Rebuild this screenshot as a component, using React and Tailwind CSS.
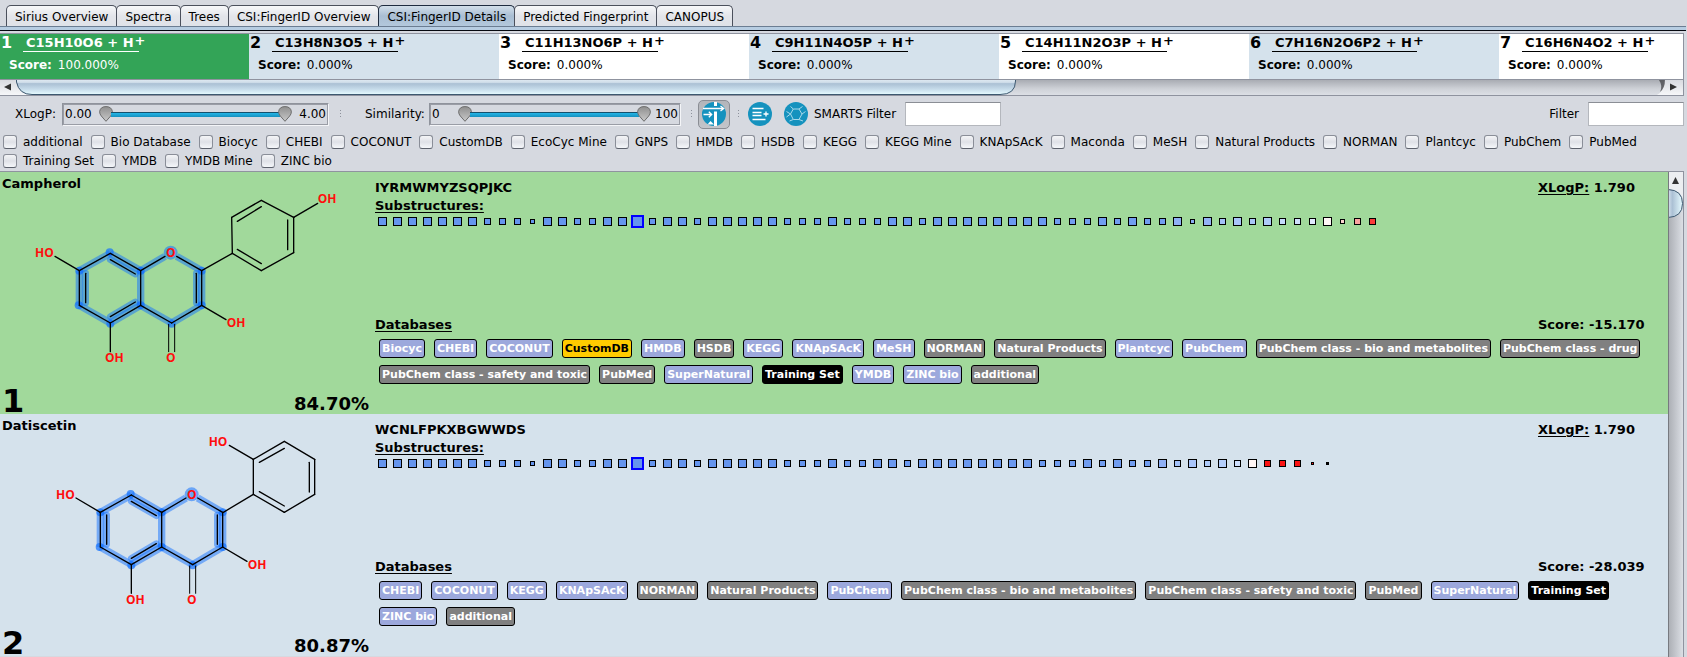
import React, { useState } from "react";

const TABS = [
  "Sirius Overview",
  "Spectra",
  "Trees",
  "CSI:FingerID Overview",
  "CSI:FingerID Details",
  "Predicted Fingerprint",
  "CANOPUS",
];

const FORMULAS = [
  ["C15H10O6", "100.000%"],
  ["C13H8N3O5", "0.000%"],
  ["C11H13NO6P", "0.000%"],
  ["C9H11N4O5P", "0.000%"],
  ["C14H11N2O3P", "0.000%"],
  ["C7H16N2O6P2", "0.000%"],
  ["C16H6N4O2", "0.000%"],
];

const DATABASES = [
  "additional", "Bio Database", "Biocyc", "CHEBI", "COCONUT", "CustomDB", "EcoCyc Mine", "GNPS",
  "HMDB", "HSDB", "KEGG", "KEGG Mine", "KNApSAcK", "Maconda", "MeSH", "Natural Products",
  "NORMAN", "Plantcyc", "PubChem", "PubMed", "Training Set", "YMDB", "YMDB Mine", "ZINC bio",
];

const SHARED = "LLLLLLLSSSTLLSSLLXSLLSLLLLLSSSL";

const CANDIDATES = [
  {
    rank: 1,
    name: "Campherol",
    key: "IYRMWMYZSQPJKC",
    similarity: "84.70%",
    xlogp: "1.790",
    score: "-15.170",
    sizes: SHARED + "SSSLLSLLLLLLLLSSSLSLSSLTLSLSLSSSLTSS",
    tail: ["#8fb0f5", "#8aacf3", "#93b3f5", "#a3c1f8", "#a9c5fa", "#a8c6f7", "#aecaf8", "#c4dafb", "#cfdffc", "#e0e9fd", "#fff6f5", "#fcd5d0", "#f9a3a0", "#fb3b3b"],
    badges: ["Biocyc", "CHEBI", "COCONUT", "CustomDB", "HMDB", "HSDB", "KEGG", "KNApSAcK", "MeSH", "NORMAN", "Natural Products", "Plantcyc", "PubChem", "PubChem class - bio and metabolites", "PubChem class - drug", "PubChem class - safety and toxic", "PubMed", "SuperNatural", "Training Set", "YMDB", "ZINC bio", "additional"],
  },
  {
    rank: 2,
    name: "Datiscetin",
    key: "WCNLFPKXBGWWDS",
    similarity: "80.87%",
    xlogp: "1.790",
    score: "-28.039",
    sizes: SHARED + "SSLLSLLLLLLLLSSSLSLSSLSLSLSLSSSMM",
    tail: ["#8fb0f5", "#a3c1f8", "#a9c5fa", "#aecaf8", "#b4cefa", "#cfdffc", "#fff6f5", "#fb1414", "#fb1414", "#fb1414", "#fb1414", "#000000"],
    badges: ["CHEBI", "COCONUT", "KEGG", "KNApSAcK", "NORMAN", "Natural Products", "PubChem", "PubChem class - bio and metabolites", "PubChem class - safety and toxic", "PubMed", "SuperNatural", "Training Set", "ZINC bio", "additional"],
  },
];

const BADGE_STYLE = {
  CustomDB: "bg-[#ffcc00] text-black",
  "Training Set": "bg-black text-white",
  HSDB: "bg-[#808080] text-white",
  NORMAN: "bg-[#808080] text-white",
  "Natural Products": "bg-[#808080] text-white",
  PubMed: "bg-[#808080] text-white",
  additional: "bg-[#808080] text-white",
};

function badgeStyle(name) {
  if (name.startsWith("PubChem class")) return "bg-[#808080] text-white";
  return BADGE_STYLE[name] || "bg-[#9ca8dc] text-white";
}

const SQUARE = {
  L: "size-[9px] border border-black",
  S: "size-[7px] border border-black",
  T: "size-[5px] border border-black",
  M: "size-[3px] border border-black",
  X: "size-[13px] border-2 border-[#0000ff]",
};

function Tabs() {
  const [active, setActive] = useState(4);
  return (
    <nav role="tablist" className="pt-[5px] mr-px">
      <div className="flex pl-1.5">
        {TABS.map((tab, i) => (
          <button
            key={tab}
            role="tab"
            aria-selected={i === active}
            onClick={() => setActive(i)}
            className={
              "h-[21px] -mr-px px-2 pt-px rounded-t-[5px] border border-b-0 whitespace-nowrap leading-5 " +
              (i === active
                ? "border-[#1f2c40] bg-linear-to-b from-[#d3dfea] via-[#a9bed3] to-[#b3c8dc]"
                : "border-[#4b505c] bg-linear-to-b from-[#f7f8fa] via-[#e3e5ea] to-[#dfe2e8]")
            }
          >
            {tab}
          </button>
        ))}
      </div>
      <div className="h-[5px] border-t border-b border-t-[#6b7d92] border-b-[#05080f] bg-[#b7cde2]" />
    </nav>
  );
}

function FormulaList() {
  return (
    <section className="mt-0.5 mr-[3px] border border-l-0 border-[#8f939f]">
      <div className="flex overflow-x-clip">
        {FORMULAS.map(([formula, score], i) => (
          <div
            key={formula}
            className={
              "h-[45px] shrink-0 " +
              (i === 0
                ? "w-[249px] bg-[#33a457] text-white border-white"
                : i % 2 === 1
                  ? "w-[250px] bg-[#d5e2ec] text-black border-black"
                  : "w-[250px] bg-white text-black border-black")
            }
          >
            <div className="flex h-[18px] items-end border-inherit font-bold">
              <span className="w-[23px] pl-px text-base leading-[18px]">{i + 1}</span>
              <span className="border-b border-inherit pl-[3px] pr-[5px] text-[13px] leading-[17px]">{formula} + H</span>
              <span className="-ml-1 h-[18px] text-[13px] leading-[13px]">+</span>
            </div>
            <div className="flex gap-1.5 pl-[9px] pt-[3px] leading-5">
              <b>Score:</b>
              <span>{score}</span>
            </div>
          </div>
        ))}
      </div>
      <div className="flex h-4 border-t border-[#8f939f]" aria-hidden="true">
        <svg className="h-[15px] w-full" preserveAspectRatio="none">
          <defs>
            <linearGradient id="track" x1="0" y1="0" x2="0" y2="1">
              <stop offset="0" stopColor="#a9acb3" />
              <stop offset="0.6" stopColor="#cfd2d8" />
              <stop offset="1" stopColor="#dcdfe5" />
            </linearGradient>
            <linearGradient id="thumb" x1="0" y1="0" x2="0" y2="1">
              <stop offset="0" stopColor="#e3ebf3" />
              <stop offset="0.22" stopColor="#d0deea" />
              <stop offset="0.3" stopColor="#abc0d4" />
              <stop offset="0.65" stopColor="#c6dbea" />
              <stop offset="1" stopColor="#e6fbff" />
            </linearGradient>
            <linearGradient id="thumbV" x1="0" y1="0" x2="1" y2="0">
              <stop offset="0" stopColor="#d6e2ee" />
              <stop offset="0.3" stopColor="#abc0d4" />
              <stop offset="1" stopColor="#e6fbff" />
            </linearGradient>
            <linearGradient id="cap" x1="0" y1="0" x2="0" y2="1">
              <stop offset="0" stopColor="#d9dbe0" />
              <stop offset="1" stopColor="#f6f7f9" />
            </linearGradient>
          </defs>
          <rect width="100%" height="15" fill="url(#track)" />
          <path d="M0 0H16Q17 12 28 15H0Z" fill="url(#cap)" />
          <path d="M11 3.5V10.500L4 7Z" fill="#333" />
          <path d="M16.500 -1V2Q19 14.500 32 14.500H1000Q1015.500 14.500 1015.500 1V-1Z" fill="url(#thumb)" stroke="#3d5870" />
          <svg x="100%" overflow="visible">
            <path d="M-19 0H0V15H-26Q-19 11 -19 0Z" fill="url(#cap)" />
            <path d="M-24 0H-18Q-18 8 -23 12Q-20 6 -24 0Z" fill="#4a4a4d" opacity="0.8" />
            <path d="M-13 3.500V10.500L-6 7Z" fill="#333" />
          </svg>
        </svg>
      </div>
    </section>
  );
}

function Thumb() {
  return (
    <svg width="14" height="16" viewBox="0 0 14 16" className="shrink-0">
      <defs>
        <linearGradient id="knob" x1="0" y1="0" x2="0" y2="1">
          <stop offset="0" stopColor="#8f8f8f" />
          <stop offset="1" stopColor="#c9c9c9" />
        </linearGradient>
      </defs>
      <path d="M7 15.300L2.300 10Q0.600 8 0.600 5.500Q1.500 0.600 7 0.600Q12.500 0.600 13.400 5.500Q13.400 8 11.700 10Z" fill="url(#knob)" stroke="#6d6d6d" />
    </svg>
  );
}

function RangeBox({ label, low, high, className, trackClass }) {
  return (
    <div
      role="group"
      aria-label={label}
      className={"flex h-[23px] items-center border border-[#8f939c] border-r-[#f4f5f8] border-b-[#f4f5f8] px-0.5 outline-1 -outline-offset-2 outline-[#9a9da6] " + className}
    >
      <span>{low}</span>
      <div className={"relative ml-auto flex w-[193px] items-center " + trackClass}>
        <Thumb />
        <div className="-mx-0.5 h-[5px] grow border-t border-[#14506c] bg-linear-to-b from-[#25b6e8] to-[#1590bd]" />
        <Thumb />
        <input type="range" aria-label={label + " minimum"} defaultValue="0" className="absolute inset-y-0 left-0 w-1/2 opacity-0" />
        <input type="range" aria-label={label + " maximum"} defaultValue="100" className="absolute inset-y-0 right-0 w-1/2 opacity-0" />
      </div>
      <span>{high}</span>
    </div>
  );
}

function Dots() {
  return (
    <svg width="2" height="8" viewBox="0 0 2 8" fill="#8d919b" aria-hidden="true" className="shrink-0">
      <rect width="1" height="1" />
      <rect y="3" width="1" height="1" />
      <rect y="6" width="1" height="1" />
    </svg>
  );
}

function Toolbar() {
  return (
    <div className="flex h-9 items-center pr-[3px] whitespace-nowrap">
      <span className="w-[47px] ml-[15px]">XLogP:</span>
      <RangeBox label="XLogP" low="0.00" high="4.00" className="w-[267px]" trackClass="mr-[7px]" />
      <div className="w-[36px] pl-[11px]"><Dots /></div>
      <span className="w-[64px]">Similarity:</span>
      <RangeBox label="Similarity" low="0" high="100" className="w-[252px]" trackClass="mr-1" />
      <div className="w-[17px] pl-2.5"><Dots /></div>
      <button aria-label="Toggle similarity filter" aria-pressed="true" className="flex h-[29px] w-8 items-center justify-center rounded-[5px] border border-[#8a8d94] bg-linear-to-b from-[#b3b5ba] to-[#c3c5ca]">
        <svg width="24" height="24" viewBox="0 0 24 24">
          <circle cx="12" cy="12" r="12" fill="#1592be" />
          <g stroke="#fff" fill="none">
            <path d="M13.500 0V4M13.500 9.500V24" strokeWidth="3" />
            <path d="M1 6.500H21.500M18.500 4L21.700 6.500L18.500 9M1.500 12.500H9.500M6.800 9.700L9.700 12.500L6.800 15.300" strokeWidth="1.300" />
          </g>
          <path d="M8.500 19L12 22.500H5.500Z" fill="#fff" />
        </svg>
      </button>
      <div className="w-[18px] pl-2"><Dots /></div>
      <button aria-label="Export list" className="mr-3">
        <svg width="24" height="24" viewBox="0 0 24 24" className="block">
          <circle cx="12" cy="12" r="12" fill="#1592be" />
          <path d="M4.500 6.500H15.500M4.500 10.500H13.500M4.500 13.500H13.500M4.500 17.500H17.500M15.500 12H20.500M18 9.500V14.500" stroke="#fff" strokeWidth="1.300" />
        </svg>
      </button>
      <button aria-label="Structure filter" className="mr-1.5">
        <svg width="24" height="24" viewBox="0 0 24 24" className="block">
          <circle cx="12" cy="12" r="12" fill="#1592be" />
          <path d="M6.500 12L9.300 7H15L18 12L15 17.500H9.300ZM9.300 7L6.500 4.500M15 7L18.500 4.500M6.500 12L2.500 9.500M18 12L21.500 9.500M9.300 17.500L5.500 19M15 17.500L19 19M6.500 12L2.500 15" fill="none" stroke="#a9d9ea" strokeWidth="1" />
        </svg>
      </button>
      <label htmlFor="smarts" className="mr-[9px]">SMARTS Filter</label>
      <input id="smarts" className="h-6 w-24 border border-[#b4b7bd] border-t-[#8b8e95] bg-white px-1 outline-none" />
      <label htmlFor="filter" className="ml-auto mr-[9px]">Filter</label>
      <input id="filter" className="h-6 w-24 border border-[#b4b7bd] border-t-[#8b8e95] bg-white px-1 outline-none" />
    </div>
  );
}

function DatabaseFilters() {
  return (
    <div className="flex flex-wrap gap-x-2 pl-[3px] pr-6 pb-px">
      {DATABASES.map((db) => (
        <label key={db} className="flex h-[19px] items-center gap-1.5 whitespace-nowrap">
          <input
            type="checkbox"
            className="size-3.5 appearance-none rounded-[3px] border border-[#8a8e98] border-b-[#5c616c] bg-linear-to-b from-[#f4f5f7] via-[#dfe1e7] to-[#f5f7fa] checked:bg-[#33628c]"
          />
          {db}
        </label>
      ))}
    </div>
  );
}

const RING_BONDS = [
  [238, 317, 331, 265], [331, 265, 422, 317], [422, 317, 422, 421], [422, 421, 331, 474],
  [331, 474, 238, 421], [238, 421, 238, 317], [422, 317, 495, 274], [530, 274, 605, 317],
  [605, 317, 605, 421], [605, 421, 515, 474], [515, 474, 422, 421],
];
const INNER_BONDS = [
  [257, 325, 257, 413], [331, 284, 406, 327], [331, 455, 406, 411], [589, 325, 589, 413],
];
const RING_ATOMS = [
  [238, 317], [329, 262], [422, 317], [422, 421], [331, 476], [236, 421], [605, 317], [605, 421], [515, 476],
];

function Bonds({ items }) {
  return items.map((b) => <line key={b.join()} x1={b[0]} y1={b[1]} x2={b[2]} y2={b[3]} />);
}

function Molecule({ rank }) {
  const first = rank === 1;
  const side = first
    ? [
        [605, 317, 697, 265], [697, 265, 695, 157], [695, 157, 784, 106], [784, 106, 881, 157], [881, 157, 881, 263],
        [881, 263, 784, 317], [784, 317, 697, 265], [712, 169, 784, 125], [863, 165, 863, 254], [712, 253, 784, 296],
        [881, 157, 953, 115],
      ]
    : [
        [670, 307, 760, 253], [760, 253, 760, 148], [760, 148, 853, 94], [853, 94, 944, 148], [944, 148, 944, 253],
        [944, 253, 853, 307], [853, 307, 760, 253], [778, 157, 853, 115], [928, 157, 928, 246], [778, 245, 853, 288],
        [760, 148, 688, 106],
      ];
  return (
    <svg
      width="375"
      height="242"
      viewBox={first ? "0 21 1125 726" : "0 12 1125 726"}
      className="block font-['Open_Sans',sans-serif] font-bold"
      role="img"
      aria-label="Molecular structure"
    >
      <g transform={first ? undefined : "translate(63 -10)"}>
        <g stroke="#1472ff" strokeOpacity="0.5" strokeWidth="22">
          <Bonds items={RING_BONDS} />
          <g strokeLinecap="round" strokeWidth="20">
            <Bonds items={INNER_BONDS} />
          </g>
        </g>
        <g fill="#1472ff" fillOpacity="0.7">
          {RING_ATOMS.map(([x, y]) => <circle key={x + "," + y} cx={x} cy={y} r="12" />)}
        </g>
        <circle cx="512" cy="263" r="21" fill="#1472ff" fillOpacity="0.55" />
        <g stroke="#000" strokeWidth="4" strokeLinecap="round">
          <Bonds items={RING_BONDS} />
          <Bonds items={INNER_BONDS} />
          <Bonds items={[[238, 317, 165, 274], [331, 474, 331, 560], [605, 421, 678, 464]]} />
          <g strokeWidth="3"><Bonds items={[[506, 478, 506, 560], [524, 478, 524, 560]]} /></g>
        </g>
        <g fill="#ff0d0d" fontSize="36">
          <text x="105" y="276">HO</text>
          <text x="498" y="276">O</text>
          <text x="680" y="486">OH</text>
          <text x="315" y="592">OH</text>
          <text x="498" y="592">O</text>
        </g>
      </g>
      <g stroke="#000" strokeWidth="4" strokeLinecap="round"><Bonds items={side} /></g>
      {first
        ? <text x="953" y="115" fill="#ff0d0d" fontSize="36">OH</text>
        : <text x="626" y="107" fill="#ff0d0d" fontSize="36">HO</text>}
    </svg>
  );
}

function Substructures({ sizes, tail }) {
  const start = sizes.length - tail.length;
  return (
    <div className="-mt-px flex">
      {sizes.split("").map((size, i) => {
        const color = i >= start ? tail[i - start] : i > 44 ? "#719df0" : i > 30 ? "#6b99f0" : "#6595ee";
        return (
          <span key={i} className="flex h-[15px] w-[15px] items-center justify-center">
            <span className={SQUARE[size]} style={{ backgroundColor: color }} />
          </span>
        );
      })}
    </div>
  );
}

function Candidate({ data }) {
  return (
    <article className={"flex min-h-[242px] text-[13px] leading-[18px] font-bold " + (data.rank % 2 ? "bg-[#a1d99b]" : "bg-[#d5e2ec]")}>
      <div className="relative w-[375px] shrink-0">
        <Molecule rank={data.rank} />
        <h2 className="absolute left-0.5 top-[3px]">{data.name}</h2>
        <span className="absolute bottom-0 left-0.5 text-[32px] leading-[26px]">{data.rank}</span>
        <span className="absolute bottom-0 right-1.5 text-[18px] leading-5">{data.similarity}</span>
      </div>
      <div className="min-w-0 grow pt-[7px]">
        <div className="flex min-h-[137px] justify-between">
          <div>
            <div>{data.key}</div>
            <div className="underline underline-offset-2">Substructures:</div>
            <Substructures sizes={data.sizes} tail={data.tail} />
          </div>
          <div className="w-[130px] shrink-0">
            <span className="underline underline-offset-2">XLogP:</span> {data.xlogp}
          </div>
        </div>
        <div className="flex justify-between">
          <span className="underline underline-offset-2">Databases</span>
          <span className="w-[130px] shrink-0">Score: {data.score}</span>
        </div>
        <ul className="flex flex-wrap gap-x-[9px] gap-y-[7px] pl-1 pt-[5px]">
          {data.badges.map((b) => (
            <li key={b} className={"h-[19px] rounded-[3px] border border-black px-0.5 text-[11px] leading-[17px] whitespace-nowrap " + badgeStyle(b)}>
              {b}
            </li>
          ))}
        </ul>
      </div>
    </article>
  );
}

export default function App() {
  return (
    <main className="flex h-screen flex-col overflow-hidden bg-[#d6d9e0] font-['DejaVu_Sans',sans-serif] text-xs text-black">
      <Tabs />
      <FormulaList />
      <Toolbar />
      <DatabaseFilters />
      <section className="mr-[3px] flex min-h-0 grow border-t border-r border-[#8f939f]">
        <div className="min-w-0 grow overflow-hidden">
          {CANDIDATES.map((c) => <Candidate key={c.rank} data={c} />)}
        </div>
        <div className="w-[15px] shrink-0 border-l border-[#77797f] bg-linear-to-r from-[#adb0b6] to-[#dcdfe5]" aria-hidden="true">
          <svg width="14" height="60" viewBox="0 0 14 60" className="block">
            <path d="M0 0H14V28Q12 19 0 17Z" fill="#eceef1" />
            <path d="M3 12L6.500 5L10 12Z" fill="#333" />
            <path d="M-1 17.500Q13.500 18 13.500 31.500Q13.500 45 -1 45.500Z" fill="url(#thumbV)" stroke="#3d5870" />
          </svg>
        </div>
      </section>
    </main>
  );
}
